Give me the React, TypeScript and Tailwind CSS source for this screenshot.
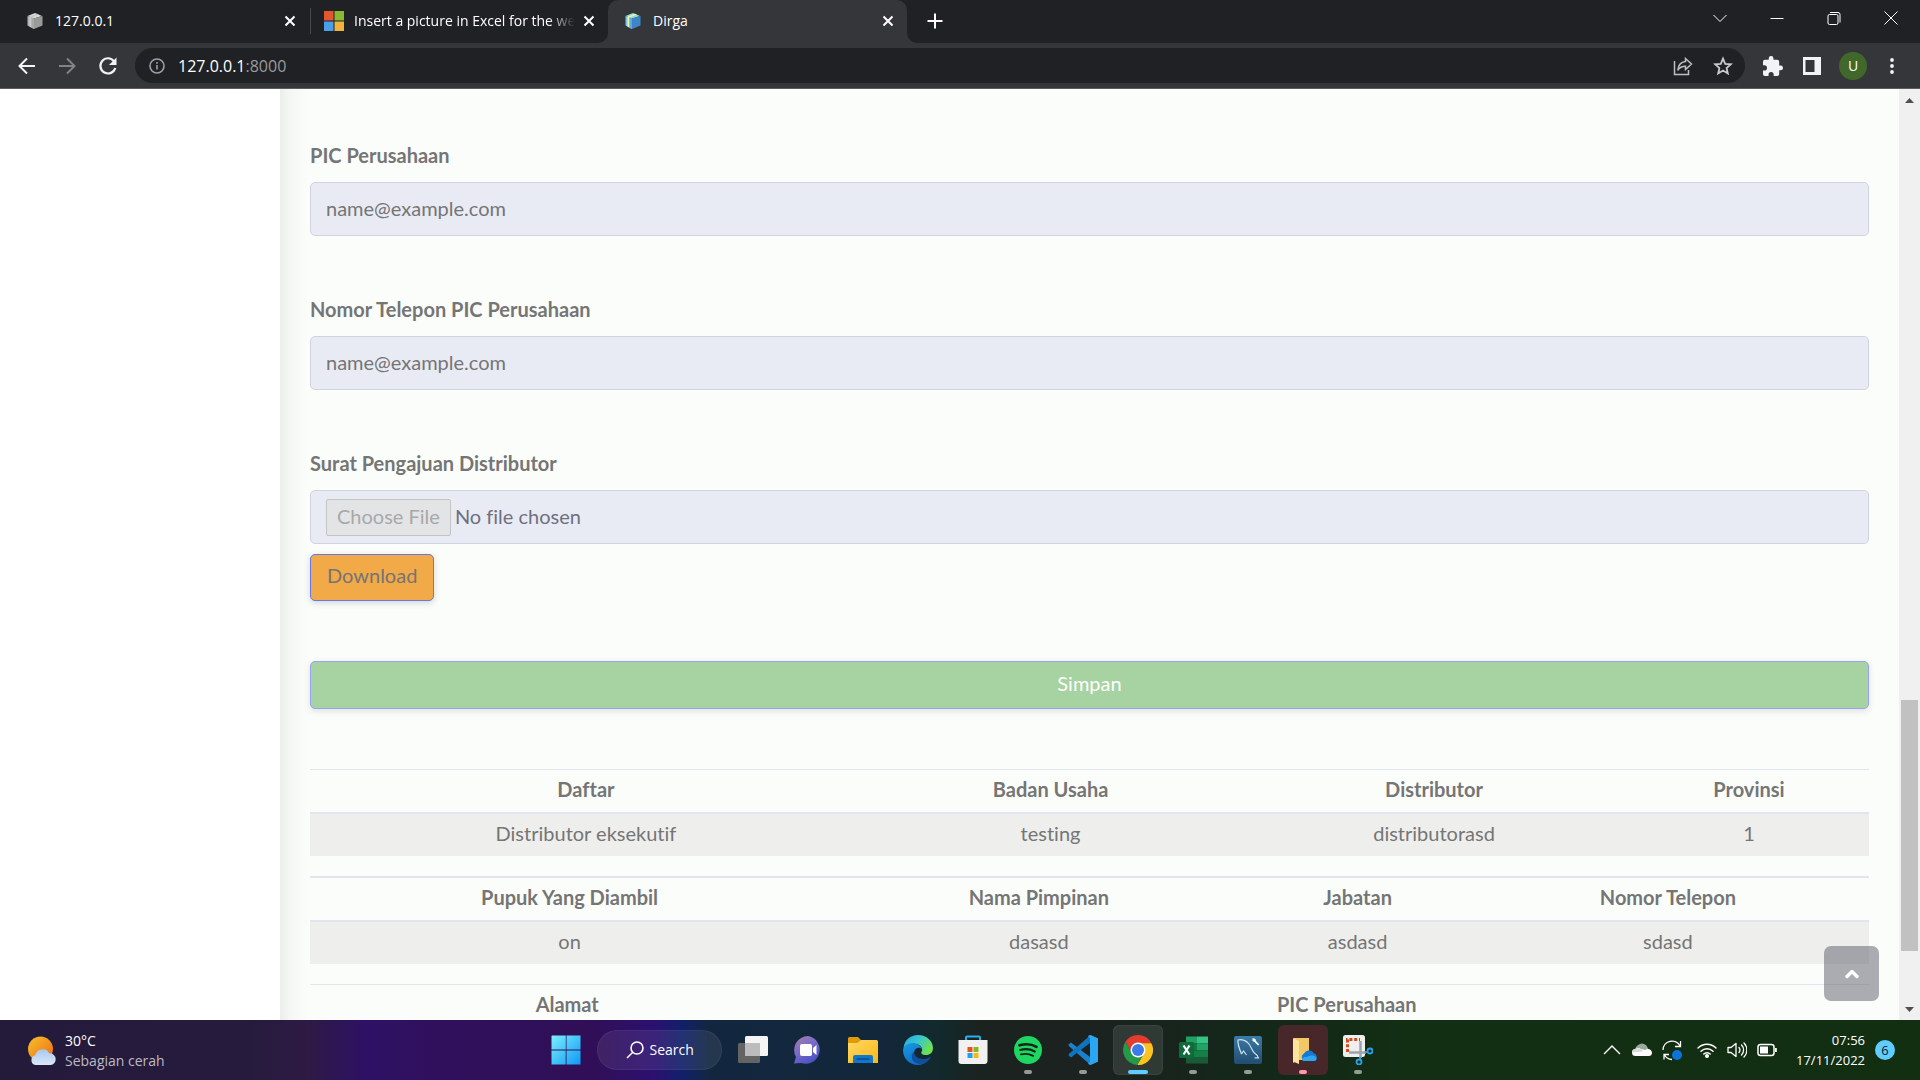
import type { ReactNode } from "react";

/* ---------- Browser icons ---------- */

function Cube({ color }: { color: boolean }) {
  const c = color
    ? { top: "#8fe0d4", left: "#7cc4e8", right: "#3f86c9", tape: "#f5f0a8", band: "#5aa9e0" }
    : { top: "#d8d8d8", left: "#b4b4b4", right: "#9a9a9a", tape: "#c9c9c9", band: "#a8a8a8" };
  return (
    <svg viewBox="0 0 18 18" className="size-[18px] shrink-0" aria-hidden="true">
      <path d="M9 1 16 4 8 6.5 1.500 4z" fill={c.top} />
      <path d="M1.500 4 8 6.500V17L1.500 13.500z" fill={c.left} />
      <path d="M8 6.500 16.500 4V13.500L8 17z" fill={c.right} />
      <path d="M3.500 4.800 11 1.800 13 2.600 5.500 5.600V15.700L3.500 14.600z" fill={c.tape} />
      <path d="M5.500 5.600 8 6.500V17L5.500 15.700z" fill={c.band} />
    </svg>
  );
}

function MicrosoftLogo() {
  return (
    <svg viewBox="0 0 20 20" className="size-5 shrink-0" aria-hidden="true">
      <path d="M0 0h9.500v9.500H0z" fill="#e2572f" />
      <path d="M10.500 0H20v9.500h-9.500z" fill="#8ab833" />
      <path d="M0 10.500h9.500V20H0z" fill="#4a9fe8" />
      <path d="M10.500 10.500H20V20h-9.500z" fill="#f0b43c" />
    </svg>
  );
}

function Line({ d, size = "size-5", w = 2, fill = "none" }: { d: string; size?: string; w?: number; fill?: string }) {
  return (
    <svg viewBox="0 0 20 20" className={size + " shrink-0"} fill={fill} stroke="currentColor" strokeWidth={w} aria-hidden="true">
      <path d={d} />
    </svg>
  );
}

function TabClose({ title }: { title: string }) {
  return (
    <button type="button" aria-label={"Close " + title} className="flex size-5 shrink-0 items-center justify-center text-white">
      <Line d="M5.500 5.500l9 9m0-9l-9 9" />
    </button>
  );
}

function Flare({ side }: { side: "left" | "right" }) {
  return (
    <svg
      viewBox="0 0 10 10"
      className={side === "left" ? "absolute bottom-0 -left-2.5 size-2.5" : "absolute bottom-0 -right-2.5 size-2.5"}
      aria-hidden="true"
    >
      <path d={side === "left" ? "M10 0V10H0A10 10 0 0 0 10 0z" : "M0 0V10H10A10 10 0 0 1 0 0z"} fill="#35363a" />
    </svg>
  );
}

function TabStrip() {
  return (
    <div className="flex h-[43px] items-stretch bg-[#202124] text-sm text-white">
      <div className="flex w-[311px] items-center pr-3 pb-px pl-[26px]">
        <Cube color={false} />
        <span className="ml-[11px] flex-1">127.0.0.1</span>
        <TabClose title="127.0.0.1" />
        <span className="ml-2.5 -mr-3 h-[26px] w-px bg-[#4a4b4f]" />
      </div>
      <div className="flex w-[297px] items-center pr-[9px] pb-px pl-[13px]">
        <MicrosoftLogo />
        <span className="mr-1 ml-2.5 flex-1 overflow-hidden whitespace-nowrap [mask-image:linear-gradient(to_right,black_88%,transparent)]">
          Insert a picture in Excel for the web
        </span>
        <TabClose title="Insert a picture in Excel for the web" />
      </div>
      <div className="relative flex w-[299px] items-center rounded-t-[10px] bg-[#35363a] pr-[9px] pb-px pl-4">
        <Flare side="left" />
        <Cube color />
        <span className="ml-[11px] flex-1">Dirga</span>
        <TabClose title="Dirga" />
        <Flare side="right" />
      </div>
      <button type="button" aria-label="New tab" className="ml-[18px] flex items-center pb-px">
        <Line d="M10 2.500v15M2.500 10h15" />
      </button>
      <div className="ml-auto flex h-9 items-center text-white">
        <button type="button" aria-label="Search tabs" className="flex w-[57px] justify-center">
          <Line d="M3.500 7l6.500 6.500L16.500 7" w={1} />
        </button>
        <button type="button" aria-label="Minimize" className="flex w-[57px] justify-center">
          <Line d="M3.500 10.500h13" w={1} />
        </button>
        <button type="button" aria-label="Restore" className="flex w-[57px] justify-center">
          <Line d="M5.500 6.500h7a1.500 1.500 0 0 1 1.500 1.500v7a1.500 1.500 0 0 1-1.500 1.500h-7A1.500 1.500 0 0 1 4 15V8a1.500 1.500 0 0 1 1.500-1.500zM6 4.500h8a2 2 0 0 1 2 2v8" w={1} />
        </button>
        <button type="button" aria-label="Close" className="flex w-[58px] justify-center">
          <Line d="M3.500 3.500l13 13m0-13l-13 13" w={1} />
        </button>
      </div>
    </div>
  );
}

function Toolbar() {
  return (
    <div className="flex h-[46px] items-center border-b border-[#5b5c5e] bg-[#35363a] pl-[17px] text-[#f1f3f4]">
      <button type="button" aria-label="Back" className="mr-5">
        <Line d="M18 10H3M10 2.500L2.500 10 10 17.500" />
      </button>
      <button type="button" aria-label="Forward" className="mr-[21px] text-[#828386]" disabled>
        <Line d="M2 10h15M10 2.500L17.500 10 10 17.500" />
      </button>
      <button type="button" aria-label="Reload" className="mr-[17px]">
        <svg viewBox="0 0 20 20" className="size-5" aria-hidden="true">
          <path d="M16 5.200A7.600 7.600 0 1 0 17.300 12" fill="none" stroke="currentColor" strokeWidth="2.200" />
          <path d="M18.500 1.500V9H11z" fill="currentColor" />
        </svg>
      </button>
      <div className="flex h-[35px] flex-1 items-center rounded-full bg-[#202124] pr-[12px] pl-[14px]">
        <svg viewBox="0 0 16 16" className="size-4 text-[#9aa0a6]" fill="none" stroke="currentColor" strokeWidth="1.600" aria-hidden="true">
          <circle cx="8" cy="8" r="7" />
          <path d="M8 7v4.500M8 4v1.800" />
        </svg>
        <div className="ml-[13px] flex-1 text-base text-white">
          127.0.0.1<span className="text-[#9a9b9e]">:8000</span>
        </div>
        <button type="button" aria-label="Share" className="mr-5 text-[#bdbebf]">
          <svg viewBox="0 0 20 20" className="size-5" fill="none" stroke="currentColor" strokeWidth="1.500" aria-hidden="true">
            <path d="M1.500 5v13.500h14V14" />
            <path d="M12.500 2.500L18.500 8l-6 5.500v-3.200C9 10.300 6.500 11.500 4.800 14.300 5.200 9.500 8 6.200 12.500 5.600z" />
          </svg>
        </button>
        <button type="button" aria-label="Bookmark this tab" className="text-[#c9cacb]">
          <Line d="M10 2.600l2.200 5.200 5.600.5-4.200 3.700 1.200 5.500L10 14.600l-4.800 2.900 1.200-5.500L2.200 8.300l5.600-.5z" w={1.8} />
        </button>
      </div>
      <div className="flex items-center pr-[19px] pl-[18px]">
        <button type="button" aria-label="Extensions">
          <svg viewBox="2 1 21 21" className="size-5" fill="currentColor" aria-hidden="true">
            <path d="M20.500 11H19V7a2 2 0 0 0-2-2h-4V3.500a2.500 2.500 0 0 0-5 0V5H4a2 2 0 0 0-2 2v3.800h1.500a2.700 2.700 0 0 1 0 5.400H2V20a2 2 0 0 0 2 2h3.800v-1.500a2.700 2.700 0 0 1 5.400 0V22H17a2 2 0 0 0 2-2v-4h1.500a2.500 2.500 0 0 0 0-5z" />
          </svg>
        </button>
        <button type="button" aria-label="Side panel" className="ml-5">
          <svg viewBox="0 0 18 18" className="size-[18px]" aria-hidden="true">
            <path d="M0 0h18v18H0z" fill="currentColor" />
            <path d="M2.500 3h9v12h-9z" fill="#35363a" />
          </svg>
        </button>
        <button type="button" aria-label="Profile" className="ml-[18px] flex size-7 items-center justify-center rounded-full bg-[#41682a] text-sm text-white">
          U
        </button>
        <button type="button" aria-label="Menu" className="ml-[16px]">
          <svg viewBox="0 0 18 18" className="size-[18px]" fill="currentColor" aria-hidden="true">
            <circle cx="9" cy="3" r="1.900" />
            <circle cx="9" cy="9" r="1.900" />
            <circle cx="9" cy="15" r="1.900" />
          </svg>
        </button>
      </div>
    </div>
  );
}

/* ---------- Page ---------- */

function TextField({ id, label }: { id: string; label: string }) {
  return (
    <div className="mb-[58px]">
      <label htmlFor={id} className="mb-3 block leading-[30px] font-bold">
        {label}
      </label>
      <input
        id={id}
        type="text"
        placeholder="name@example.com"
        className="block h-[54px] w-full rounded-[5px] border border-[#d1d3e2] bg-[#e9ebf4] px-[15px] pb-0.5 placeholder:text-[#757575]"
      />
    </div>
  );
}

interface Column {
  head: string;
  value?: string;
  width: string;
}

function DataTable({ columns, thick = false }: { columns: Column[]; thick?: boolean }) {
  return (
    <table
      className={
        thick
          ? "mb-5 w-full table-fixed border-separate border-spacing-0 border-t-2 border-[#e3e4f0] text-center leading-[30px]"
          : "mb-5 w-full table-fixed border-separate border-spacing-0 border-t border-[#e3e4f0] text-center leading-[30px]"
      }
    >
      <thead>
        <tr>
          {columns.map((c) => (
            <th key={c.head} className={c.width + " px-1.5 pt-1 pb-2 font-bold"}>
              {c.head}
            </th>
          ))}
        </tr>
      </thead>
      <tbody>
        <tr className="bg-[#eeefed]">
          {columns.map((c) => (
            <td key={c.head} className="border-t-2 border-[#e3e4f0] px-1.5 pt-1 pb-2">
              {c.value}
            </td>
          ))}
        </tr>
      </tbody>
    </table>
  );
}

const firstTable: Column[] = [
  { head: "Daftar", value: "Distributor eksekutif", width: "w-[35.4%]" },
  { head: "Badan Usaha", value: "testing", width: "w-[24.2%]" },
  { head: "Distributor", value: "distributorasd", width: "w-[25%]" },
  { head: "Provinsi", value: "1", width: "w-[15.4%]" },
];

const secondTable: Column[] = [
  { head: "Pupuk Yang Diambil", value: "on", width: "w-[33.3%]" },
  { head: "Nama Pimpinan", value: "dasasd", width: "w-[26.9%]" },
  { head: "Jabatan", value: "asdasd", width: "w-[14%]" },
  { head: "Nomor Telepon", value: "sdasd", width: "w-[25.8%]" },
];

const thirdTable: Column[] = [
  { head: "Alamat", width: "w-[33%]" },
  { head: "PIC Perusahaan", width: "w-[67%]" },
];

function Page() {
  return (
    <main className="min-w-0 flex-1 overflow-hidden bg-[linear-gradient(to_right,#eceeec,#f5f7f4_10px,#fbfdfa_28px)] px-[30px] pt-[51px] text-xl text-[#757575] [font-family:Lato,'Open_Sans',sans-serif] [font-variant-ligatures:none]">
      <form>
        <TextField id="pic" label="PIC Perusahaan" />
        <TextField id="pic-phone" label="Nomor Telepon PIC Perusahaan" />
        <div className="mb-[60px]">
          <label htmlFor="letter" className="mb-3 block leading-[30px] font-bold">
            Surat Pengajuan Distributor
          </label>
          <input
            id="letter"
            type="file"
            disabled
            className="mb-2.5 block h-[54px] w-full rounded-[5px] border border-[#d1d3e2] bg-[#e9ebf4] px-[15px] py-2 leading-[35px] text-[#6e707e] file:mr-1 file:h-[37px] file:rounded-[2px] file:border file:border-solid file:border-[#c3c4c6] file:bg-[#e3e4e6] file:px-2.5 file:pb-1 file:leading-[33px] file:text-[#a8a8a8]"
          />
          <button
            type="button"
            className="block rounded-[5px] border border-[#6577ea] bg-[#f2a947] px-4 pt-1.5 pb-2.5 leading-[29px] shadow-[0_2px_6px_rgba(58,59,69,0.2)]"
          >
            Download
          </button>
        </div>
        <button
          type="button"
          className="mb-[60px] block w-full rounded-[5px] border border-[#99a4f0] bg-[#a7d2a1] pt-1.5 pb-2.5 leading-[30px] text-white shadow-[0_2px_6px_rgba(58,59,69,0.15)]"
        >
          Simpan
        </button>
      </form>
      <DataTable columns={firstTable} />
      <DataTable columns={secondTable} thick />
      <DataTable columns={thirdTable} />
    </main>
  );
}

function ScrollRail() {
  return (
    <div className="flex w-[21px] shrink-0 flex-col items-center bg-[#f0f0f0]">
      <svg viewBox="0 0 21 22" className="h-[22px] w-[21px]" aria-hidden="true">
        <path d="M6 14l4.500-5 4.500 5z" fill="#505050" />
      </svg>
      <div className="flex-[589]" />
      <div className="w-[17px] flex-[251] bg-[#c1c1c1]" />
      <div className="flex-[47]" />
      <svg viewBox="0 0 21 22" className="h-[22px] w-[21px]" aria-hidden="true">
        <path d="M6 9l4.500 5 4.500-5z" fill="#505050" />
      </svg>
    </div>
  );
}

/* ---------- Taskbar ---------- */

function Art({ children, box = 30 }: { children: ReactNode; box?: number }) {
  return (
    <svg viewBox={"0 0 " + box + " " + box} className="size-[30px]" aria-hidden="true">
      {children}
    </svg>
  );
}

const startArt = (
  <Art>
    <defs>
      <linearGradient id="st" x1="0" y1="0" x2="1" y2="1">
        <stop offset="0" stopColor="#7af0fd" />
        <stop offset="1" stopColor="#1098f5" />
      </linearGradient>
    </defs>
    <path d="M1 .5h13.800v14H.500V1zM15.500.500H29.500V14.500h-14zM.500 15.500h14.200v14H.500zM15.500 15.500h14v14h-14z" fill="url(#st)" />
  </Art>
);

const taskViewArt = (
  <Art>
    <rect x="0" y="8" width="22" height="20" rx="1.500" fill="#646464" />
    <rect x="7" y="1" width="23" height="20" rx="1.500" fill="#f4f4f4" />
    <path d="M7 8h15v13H8.500A1.500 1.500 0 0 1 7 19.500z" fill="#bcbcbc" />
  </Art>
);

const chatArt = (
  <Art>
    <defs>
      <linearGradient id="ch" x1="0" y1="0" x2="0.600" y2="1">
        <stop offset="0" stopColor="#a87fa8" />
        <stop offset="0.500" stopColor="#7a6bc8" />
        <stop offset="1" stopColor="#4a52c4" />
      </linearGradient>
    </defs>
    <path d="M15 1A14 14 0 0 0 3 22L1 28.500 8 28a14 14 0 1 0 7-27z" fill="url(#ch)" />
    <rect x="7" y="9" width="12" height="12" rx="2" fill="#fff" />
    <path d="M20 13l3.500-3v10L20 17z" fill="#fff" />
  </Art>
);

const explorerArt = (
  <Art>
    <defs>
      <linearGradient id="ex" x1="0" y1="0" x2="1" y2="1">
        <stop offset="0" stopColor="#ffd868" />
        <stop offset="1" stopColor="#fbb812" />
      </linearGradient>
    </defs>
    <path d="M0 3.500A1.500 1.500 0 0 1 1.500 2H10l3 3v6H0z" fill="#e09c08" />
    <path d="M0 8h9.500L13 5h15.500A1.500 1.500 0 0 1 30 6.500V28H0z" fill="url(#ex)" />
    <path d="M5 28v-6a2 2 0 0 1 2-2h16a2 2 0 0 1 2 2v6z" fill="#1078cc" />
    <path d="M8.500 24h13" stroke="#0b4a86" strokeWidth="1.500" />
  </Art>
);

const edgeArt = (
  <Art>
    <defs>
      <linearGradient id="ed1" x1="0" y1="0" x2="1" y2="0.500">
        <stop offset="0" stopColor="#2aa8e0" />
        <stop offset="0.500" stopColor="#37c6d0" />
        <stop offset="1" stopColor="#6ee052" />
      </linearGradient>
      <linearGradient id="ed2" x1="0" y1="0" x2="0.600" y2="1">
        <stop offset="0" stopColor="#1a9be0" />
        <stop offset="1" stopColor="#0c6cc8" />
      </linearGradient>
    </defs>
    <path d="M.500 13C1.500 5 7.500 0 15 0c8.500 0 15 6 15 13 0 4.500-3 7-7 7-3.500 0-5.500-1.500-4.500-3 2-3-.500-8-6.500-8C6 9 2 11 .500 13z" fill="url(#ed1)" />
    <path d="M0 15C.500 10.500 5 7.500 11 8c4 .500 7 3 7.500 6-2-2.500-7-1.500-7.500 3.500C10.500 24 16 28 22 28c-2 1.300-4.500 2-7 2C6.500 30 0 23.500 0 15z" fill="url(#ed2)" />
    <path d="M11 16.500c0 4.500 4 7.500 9 7.500 3 0 5-.800 6.500-1.800.800-.400 1.200.200.800.800C25 27 20.500 29.500 16 29 9 28 6.500 20.500 11 16.500z" fill="#0f4f9e" />
  </Art>
);

const storeArt = (
  <Art>
    <path d="M8 6V2.500A1 1 0 0 1 9 1.500h12a1 1 0 0 1 1 1V6" fill="none" stroke="#28b0ea" strokeWidth="2" />
    <path d="M.500 5h29v21a3 3 0 0 1-3 3h-23a3 3 0 0 1-3-3z" fill="#f1f1f2" />
    <path d="M9.500 12H14.500v5h-5z" fill="#e8502a" />
    <path d="M15.500 12h5v5h-5z" fill="#84ba20" />
    <path d="M9.500 18H14.500v5h-5z" fill="#1ca3e8" />
    <path d="M15.500 18h5v5h-5z" fill="#fab816" />
  </Art>
);

const spotifyArt = (
  <Art>
    <circle cx="15" cy="15" r="14" fill="#1ed760" />
    <g fill="none" stroke="#14241c" strokeLinecap="round">
      <path d="M6.500 10.300c5.500-1.600 12.500-1.100 17 1.500" strokeWidth="2.600" />
      <path d="M7.200 15c5-1.400 10.500-.800 14.600 1.500" strokeWidth="2.200" />
      <path d="M8 19.400c4.200-1.100 8.500-.600 12.200 1.500" strokeWidth="1.800" />
    </g>
  </Art>
);

const vscodeArt = (
  <Art>
    <path d="M.500 9.500L3 7.500 22 22v7.500L.800 11z" fill="#1a82cc" />
    <path d="M.500 20.500L3 22.500 22 8V.500L.800 19z" fill="#0f74bd" />
    <path d="M21 .300Q22 0 23 .300L30 3.500v23L23 29.700Q22 30 21 29.500L20 28.500 22 27V3L20 1.500z" fill="#2aa6f2" />
    <path d="M22 0l8 3.500v23L22 30z" fill="#2aa6f2" />
  </Art>
);

const chromeArt = (
  <Art box={48}>
    <g transform="translate(24 24) scale(1.09) translate(-24 -24)">
      <path d="M5.540 12.030A22 22 0 0 1 43.600 14L24 14A10 10 0 0 0 15.340 29z" fill="#e33b2e" />
      <path d="M43.600 14A22 22 0 0 1 22.860 45.970L32.660 29A10 10 0 0 0 24 14z" fill="#fcc31e" />
      <path d="M22.860 45.970A22 22 0 0 1 5.540 12.030L15.340 29A10 10 0 0 0 32.660 29z" fill="#239a48" />
      <circle cx="24" cy="24" r="11" fill="#fff" />
      <circle cx="24" cy="24" r="8.800" fill="#3c7ce8" />
    </g>
  </Art>
);

const excelArt = (
  <Art>
    <path d="M8 1.500h11v7H8z" fill="#21a064" />
    <path d="M19 1.500h11v7H19z" fill="#34c481" />
    <path d="M8 8.500h11v7H8z" fill="#117a41" />
    <path d="M19 8.500h11v7H19z" fill="#21a366" />
    <path d="M8 15.500h22v7H8z" fill="#138048" />
    <path d="M8 22h22v6.500H8z" fill="#185c37" />
    <rect x="1" y="7" width="15" height="16" rx="1.500" fill="#0f6b39" />
    <path d="M5.500 10.500l6 9M11.500 10.500l-6 9" stroke="#fff" strokeWidth="2.200" />
  </Art>
);

const mysqlArt = (
  <Art>
    <defs>
      <linearGradient id="my" x1="0" y1="0" x2="0" y2="1">
        <stop offset="0" stopColor="#3a7ba6" />
        <stop offset="1" stopColor="#214d70" />
      </linearGradient>
    </defs>
    <rect x="1" y="1" width="28" height="28" rx="2" fill="url(#my)" />
    <path d="M8.500 19C6 13 4.500 8 5 5c3-1 8 0 11 4 2.500 3.500 3 7 5.500 9 2 1.500 3.500 2.500 4 5-1.500-.300-3 0-4 0M8.500 19l2-3 3 4" fill="none" stroke="#cfe0ea" strokeWidth="1.200" />
    <path d="M19.500 3l3 1 .500 2 3.500 3.500-1.500 1L21.500 7l-2-1z" fill="#f2f6f8" />
  </Art>
);

const folderArt = (
  <Art>
    <path d="M6 3h15v22H11L5 28z" fill="#f2c766" />
    <path d="M5 3l6 3v23l-6-2.500z" fill="#ffe39a" />
    <path d="M17 26a4 4 0 0 1-1-7.500 5.500 5.500 0 0 1 9.500-.500 4.500 4.500 0 0 1 1.500 8z" fill="#1478d4" />
    <path d="M15 26c-2-2 0-4.500 3-4l5-1.500c3-.500 6 1.500 5.500 3.500-.300 1.500-1.500 2-3 2z" fill="#2fa6f0" />
  </Art>
);

const snipArt = (
  <Art>
    <rect x="0" y="0" width="22" height="22" rx="2.500" fill="#f1efee" />
    <path d="M4.500 17V4.500H17" fill="none" stroke="#d24a1c" strokeWidth="3" strokeDasharray="3 1.800" />
    <path d="M17.500 6v17M6 17.500h17" stroke="#9aa4ac" strokeWidth="2.500" />
    <circle cx="27" cy="16" r="2.500" fill="none" stroke="#2fa0e6" strokeWidth="1.800" />
    <circle cx="16" cy="27" r="2.500" fill="none" stroke="#2fa0e6" strokeWidth="1.800" />
    <path d="M22 17.500l3-.800M17.500 22l-.800 3" stroke="#2fa0e6" strokeWidth="1.800" />
  </Art>
);

const weatherArt = (
  <Art>
    <defs>
      <linearGradient id="sun" x1="0" y1="0" x2="1" y2="1">
        <stop offset="0" stopColor="#f5c22e" />
        <stop offset="1" stopColor="#ee6a10" />
      </linearGradient>
      <linearGradient id="cl" x1="0" y1="0" x2="0" y2="1">
        <stop offset="0" stopColor="#a6c8f2" />
        <stop offset="1" stopColor="#dbe8fa" />
      </linearGradient>
    </defs>
    <circle cx="13.500" cy="13" r="12.500" fill="url(#sun)" />
    <path d="M8.500 29a5 5 0 0 1-.200-9.800 7.500 7.500 0 0 1 14-1.800A5.800 5.800 0 1 1 23.500 29z" fill="url(#cl)" />
  </Art>
);

type TileState = "idle" | "open" | "active" | "alert";

const apps: { name: string; art: ReactNode; state: TileState }[] = [
  { name: "Task View", art: taskViewArt, state: "idle" },
  { name: "Chat", art: chatArt, state: "idle" },
  { name: "File Explorer", art: explorerArt, state: "idle" },
  { name: "Microsoft Edge", art: edgeArt, state: "idle" },
  { name: "Microsoft Store", art: storeArt, state: "idle" },
  { name: "Spotify", art: spotifyArt, state: "open" },
  { name: "Visual Studio Code", art: vscodeArt, state: "open" },
  { name: "Google Chrome", art: chromeArt, state: "active" },
  { name: "Excel", art: excelArt, state: "open" },
  { name: "MySQL Workbench", art: mysqlArt, state: "open" },
  { name: "OneDrive folder", art: folderArt, state: "alert" },
  { name: "Snipping Tool", art: snipArt, state: "open" },
];

const tileClass: Record<TileState, string> = {
  idle: "",
  open: "",
  active: "bg-white/10 ring-1 ring-inset ring-white/5",
  alert: "bg-[#48272b]",
};

const barClass: Record<TileState, string> = {
  idle: "hidden",
  open: "w-2 bg-[#959b95]",
  active: "w-5 bg-[#60cdff]",
  alert: "w-2 bg-[#ff99a4]",
};

function Tile({ name, art, state }: { name: string; art: ReactNode; state: TileState }) {
  return (
    <button type="button" aria-label={name} className={"relative flex size-[50px] items-center justify-center rounded-md " + tileClass[state]}>
      {art}
      <span className={"absolute bottom-px h-1 rounded-full " + barClass[state]} />
    </button>
  );
}

function Taskbar() {
  return (
    <footer className="grid h-[60px] shrink-0 grid-cols-[1fr_auto_1fr] items-center bg-[linear-gradient(to_right,#241a3a_0%,#261b3d_13%,#2e1a44_16%,#2e1166_19%,#30105c_23%,#300f58_31%,#2c1070_34%,#12206a_35.500%,#12273f_37%,#13273a_46%,#12292c_49%,#1b2320_51%,#1b221f_57%,#14271a_65%,#122e13_73%,#122f12_100%)] text-sm text-white">
      <div className="flex items-center pt-px pl-[27px]">
        {weatherArt}
        <div className="ml-2 leading-5">
          <div>30°C</div>
          <div className="text-[#bdbac4]">Sebagian cerah</div>
        </div>
      </div>
      <div className="flex items-center gap-[5px] pl-[3px]">
        <Tile name="Start" art={startArt} state="idle" />
        <button type="button" className="mx-px flex h-10 w-[125px] items-center rounded-full bg-white/8 pl-[29px] ring-1 ring-white/5 ring-inset">
          <svg viewBox="0 0 18 18" className="size-[18px]" fill="none" stroke="currentColor" strokeWidth="1.600" aria-hidden="true">
            <circle cx="11" cy="7" r="6" />
            <path d="M6.800 11.200L1 17" />
          </svg>
          <span className="ml-1.5">Search</span>
        </button>
        {apps.map((a) => (
          <Tile key={a.name} {...a} />
        ))}
      </div>
      <div className="flex items-center justify-end pr-[25px]">
        <button type="button" aria-label="Show hidden icons" className="mr-[10px]">
          <Line d="M2 14l8-8 8 8" w={1.4} />
        </button>
        <svg viewBox="0 0 20 20" className="mr-[10px] size-5" aria-hidden="true">
          <path d="M4 12a5 5 0 0 1 1.500-6.500 6 6 0 0 1 10 2L17 10z" fill="#9aab9a" />
          <path d="M3.500 16a3.500 3.500 0 0 1 0-7c2-1.500 4-1 5.500 0l4 1c3-2 7-.500 7 3 0 2-1.500 3-3 3z" fill="#fff" />
          <path d="M0 12.500A3.500 3.500 0 0 1 4.500 9C7 7 9.500 9 11 11.500z" fill="#d7ddd7" />
        </svg>
        <svg viewBox="0 0 20 20" className="mr-[15px] size-5 overflow-visible" fill="none" stroke="#fff" strokeWidth="1.300" aria-hidden="true">
          <path d="M1 10a9 9 0 0 1 17-4M18.500 1v5.500H13M10 19.500a9 9 0 0 1-7.500-4.500M2 19.500V14.500h5" />
          <circle cx="15" cy="15" r="5" fill="#0a74da" stroke="none" />
        </svg>
        <svg viewBox="0 0 20 20" className="mr-[10px] size-5" fill="none" stroke="#fff" strokeWidth="1.500" strokeLinecap="round" aria-hidden="true">
          <path d="M1 8a12.700 12.700 0 0 1 18 0M4 11.200a8.500 8.500 0 0 1 12 0M6.800 14a4.500 4.500 0 0 1 6.400 0" />
          <circle cx="10" cy="16" r="1.300" fill="#fff" />
        </svg>
        <svg viewBox="0 0 20 20" className="mr-[10px] size-5" fill="none" stroke="#fff" strokeWidth="1.300" strokeLinecap="round" strokeLinejoin="round" aria-hidden="true">
          <path d="M1 7.500h3L9 3.500v13L4 12.500H1zM12 7.500a4 4 0 0 1 0 5M14.500 5a7 7 0 0 1 0 10M17 3a10 10 0 0 1 0 14" />
        </svg>
        <svg viewBox="0 0 20 20" className="size-5" aria-hidden="true">
          <rect x="1" y="4.500" width="16" height="11" rx="2.500" fill="none" stroke="#fff" strokeWidth="1.500" />
          <path d="M3 6.500h8v7H3zM18 8h1.800v4H18z" fill="#fff" />
        </svg>
        <div className="ml-[19px] text-right text-[13px] leading-5">
          <div>07:56</div>
          <div>17/11/2022</div>
        </div>
        <span className="ml-2.5 flex size-5 items-center justify-center rounded-full bg-[#60cdff] text-[13px] leading-5 text-[#10202c]">6</span>
      </div>
    </footer>
  );
}

export default function App() {
  return (
    <div className="flex h-screen flex-col overflow-hidden bg-white [font-family:'Open_Sans','Noto_Sans',sans-serif]">
      <header className="shrink-0">
        <TabStrip />
        <Toolbar />
      </header>
      <div className="relative flex min-h-0 flex-1">
        <aside className="w-[280px] shrink-0 bg-white" />
        <Page />
        <ScrollRail />
        <a
          href="#top"
          aria-label="Scroll to top"
          className="absolute right-[41px] bottom-[19px] flex size-[55px] items-center justify-center rounded-[7px] bg-[#5a5c69]/50 text-white"
        >
          <svg viewBox="0 0 14 10" className="h-2.5 w-3.5" fill="none" stroke="currentColor" strokeWidth="3.400" strokeLinecap="round" strokeLinejoin="round" aria-hidden="true">
            <path d="M2 7.500l5-5 5 5" />
          </svg>
        </a>
      </div>
      <Taskbar />
    </div>
  );
}
